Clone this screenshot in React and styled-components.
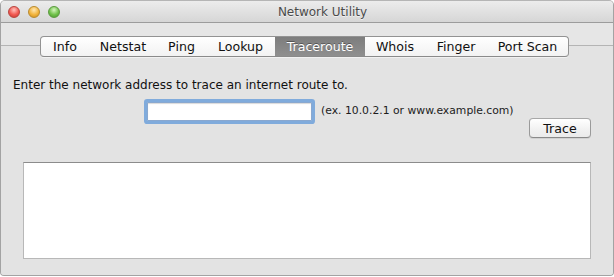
import React from 'react';
import styled, { createGlobalStyle } from 'styled-components';

const GlobalStyle = createGlobalStyle`
  html, body {
    margin: 0;
    padding: 0;
    background: #ffffff;
  }
  body {
    font-family: "Lucida Grande", "DejaVu Sans", "Noto Sans", sans-serif;
  }
`;

const Window = styled.div`
  width: 614px;
  height: 276px;
  box-sizing: border-box;
  border: 1px solid #a3a3a3;
  border-top-color: #b5b5b5;
  border-radius: 5px 5px 4px 4px;
  overflow: hidden;
  display: flex;
  flex-direction: column;
  background: #e3e3e3;
`;

const TitleBar = styled.div`
  height: 21px;
  flex: none;
  display: flex;
  align-items: center;
  background: linear-gradient(#ececec, #d6d6d6);
  border-bottom: 1px solid #9c9c9c;
`;

const Lights = styled.div`
  display: flex;
  gap: 8px;
  padding-left: 7px;
`;

const Light = styled.span`
  width: 12px;
  height: 12px;
  border-radius: 50%;
  box-sizing: border-box;
  border: 1px solid ${p => p.$edge};
  background: radial-gradient(circle at 50% 30%, ${p => p.$hi} 0%, ${p => p.$color} 55%, ${p => p.$dark} 100%);
`;

const Title = styled.div`
  flex: 1;
  text-align: center;
  margin-right: 28px;
  font-size: 12px;
  color: #4a4a4a;
  text-shadow: 0 1px 0 rgba(255, 255, 255, 0.6);
`;

const Header = styled.div`
  height: 22px;
  flex: none;
  background: #e6e6e6;
`;

const Panel = styled.div`
  flex: 1;
  border-top: 1px solid #b4b4b4;
  background: #e3e3e3;
  display: flex;
  flex-direction: column;
`;

const Tabs = styled.div`
  display: flex;
  align-self: flex-start;
  margin: -10px 0 0 39px;
  height: 19px;
  border: 1px solid #939393;
  border-bottom-color: #8a8a8a;
  border-radius: 4px;
  overflow: hidden;
  background: linear-gradient(#ffffff, #f2f2f2);
  box-shadow: 0 1px 0 rgba(255, 255, 255, 0.5);
`;

const Tab = styled.div`
  width: ${p => p.$w}px;
  display: flex;
  align-items: center;
  justify-content: center;
  font-size: 12.6px;
  box-sizing: border-box;
  color: ${p => (p.$active ? '#ffffff' : '#111111')};
  background: ${p => (p.$active ? 'linear-gradient(#7d7d7d, #8f8f8f)' : 'transparent')};
  text-shadow: ${p => (p.$active ? '0 -1px 0 rgba(0,0,0,0.35)' : 'none')};
  position: relative;
  & + &::before {
    content: '';
    position: absolute;
    left: 0;
    top: 3px;
    bottom: 3px;
    width: 1px;
    background: ${p => (p.$active || p.$afterActive ? 'transparent' : '#cfcfcf')};
  }
`;

const Prompt = styled.div`
  margin: 20px 0 0 12px;
  font-size: 12px;
  line-height: 16px;
  color: #111111;
`;

const AddressRow = styled.div`
  display: flex;
  align-items: center;
  margin: 6px 0 0 143px;
  gap: 6px;
`;

const AddressInput = styled.input`
  width: 165px;
  height: 19px;
  box-sizing: border-box;
  border: 1px solid #8aa8cf;
  margin: 3px;
  outline: none;
  background: #ffffff;
  box-shadow: 0 0 0 3px #80abdc, inset 0 1px 1px rgba(0, 0, 0, 0.15);
  border-radius: 1px;
  font-family: inherit;
  font-size: 12px;
  padding: 0 3px;
`;

const Hint = styled.span`
  font-size: 10.8px;
  color: #1c1c1c;
  margin-top: -2px;
`;

const ButtonRow = styled.div`
  display: flex;
  justify-content: flex-end;
  padding-right: 22px;
  margin-top: -6px;
`;

const Button = styled.button`
  width: 62px;
  height: 20px;
  box-sizing: border-box;
  border: 1px solid #9a9a9a;
  border-top-color: #a8a8a8;
  border-bottom-color: #8a8a8a;
  border-radius: 4px;
  background: linear-gradient(#ffffff, #f1f1f1 60%, #ebebeb);
  box-shadow: 0 1px 0 rgba(0, 0, 0, 0.08);
  font-family: inherit;
  font-size: 12.6px;
  color: #111111;
  padding: 0;
`;

const Output = styled.div`
  margin: 24px 22px 0 22px;
  height: 97px;
  box-sizing: border-box;
  background: #ffffff;
  border: 1px solid #b8b8b8;
  border-top-color: #8c8c8c;
`;

const tabs = [
  ['Info', 48],
  ['Netstat', 68],
  ['Ping', 49],
  ['Lookup', 69],
  ['Traceroute', 90],
  ['Whois', 60],
  ['Finger', 62],
  ['Port Scan', 81],
];

export default function App() {
  const active = 'Traceroute';
  const activeIndex = tabs.findIndex(([name]) => name === active);

  return (
    <>
      <GlobalStyle />
      <Window>
        <TitleBar>
          <Lights>
            <Light $color="#f25a52" $hi="#ffc2bd" $dark="#c23a33" $edge="#b8443e" />
            <Light $color="#f2b43c" $hi="#ffe7b3" $dark="#c98a1f" $edge="#b98a2e" />
            <Light $color="#70c24a" $hi="#d5f5bf" $dark="#4a9630" $edge="#5a9a3e" />
          </Lights>
          <Title>Network Utility</Title>
        </TitleBar>
        <Header />
        <Panel>
          <Tabs>
            {tabs.map(([name, w], i) => (
              <Tab key={name} $w={w} $active={i === activeIndex} $afterActive={i === activeIndex + 1}>
                {name}
              </Tab>
            ))}
          </Tabs>
          <Prompt>Enter the network address to trace an internet route to.</Prompt>
          <AddressRow>
            <AddressInput type="text" />
            <Hint>(ex. 10.0.2.1 or www.example.com)</Hint>
          </AddressRow>
          <ButtonRow>
            <Button>Trace</Button>
          </ButtonRow>
          <Output />
        </Panel>
      </Window>
    </>
  );
}
